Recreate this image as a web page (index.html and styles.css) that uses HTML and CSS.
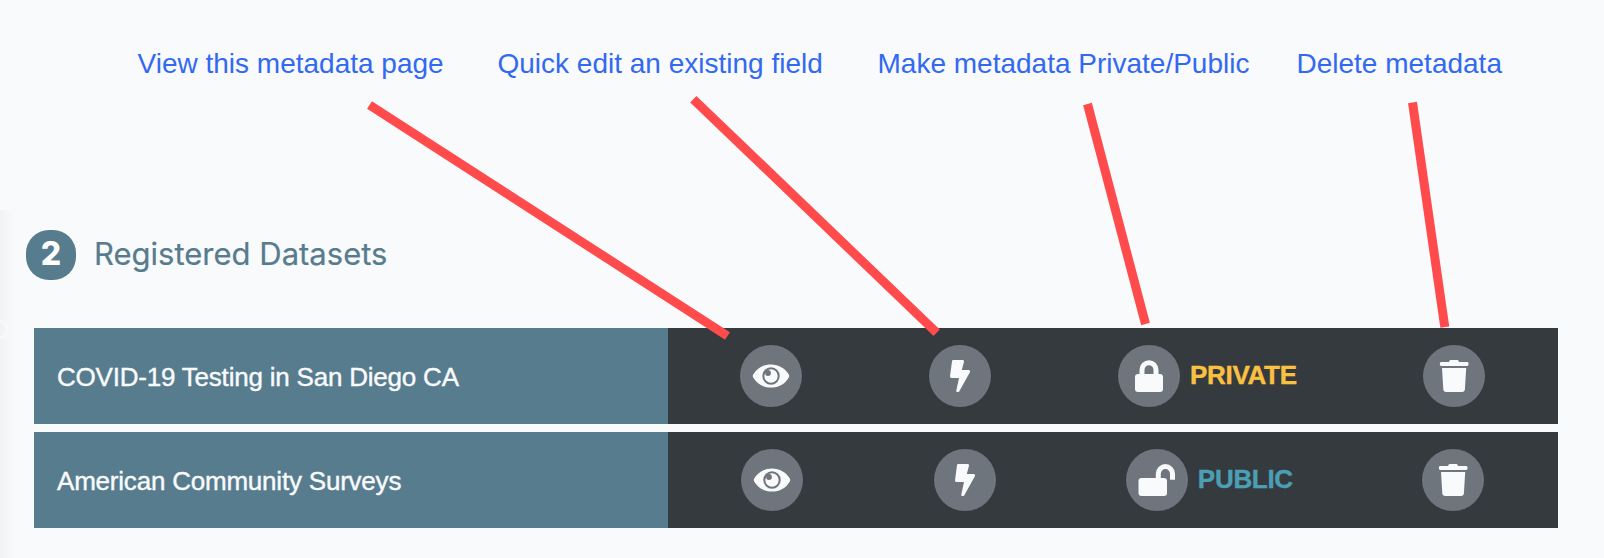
FILE: index.html
```html
<!DOCTYPE html>
<html lang="en">
<head>
<meta charset="utf-8">
<title>Registered Datasets</title>
<link rel="stylesheet" href="styles.css">
</head>
<body>
<svg class="symbols" width="0" height="0">
  <symbol id="eye" viewBox="0 0 62 62">
    <path fill="#f8fafc" d="M13.2 29.6C17 23 23.500 19.400 31 19.400S45 23 48.800 29.600a2.700 2.700 0 0 1 0 2.800C45 39 38.500 42.600 31 42.600S17 39 13.200 32.400a2.700 2.700 0 0 1 0-2.800Z"/>
    <circle cx="31" cy="31" r="7.700" fill="#f8fafc" stroke="#6e757d" stroke-width="2"/>
    <circle cx="28" cy="28" r="2.900" fill="#6e757d"/>
  </symbol>
  <symbol id="bolt" viewBox="0 0 62 62">
    <path fill="#f8fafc" d="M24.500 15h9.200c1 0 1.600.9 1.300 1.800L32.800 25H39.600c1.200 0 1.900 1.200 1.300 2.200L30.300 46.200c-.4.700-.9.900-1.700.9-1 0-1.500-.9-1.300-1.700L30 33H22.500c-.9 0-1.600-.8-1.500-1.700L23 16.300c.1-.8.700-1.300 1.500-1.300Z"/>
  </symbol>
  <symbol id="lock" viewBox="0 0 62 62">
    <path fill="none" stroke="#f8fafc" stroke-width="5" d="M24 32v-7a7 7.300 0 0 1 14 0v7"/>
    <rect x="17" y="29" width="28" height="18" rx="3" fill="#f8fafc"/>
  </symbol>
  <symbol id="unlock" viewBox="0 0 62 62">
    <path fill="none" stroke="#f8fafc" stroke-width="5" d="M32.300 32v-7.300a7.100 7.100 0 0 1 14.200 0v6"/>
    <rect x="12.500" y="29" width="28.500" height="18" rx="3" fill="#f8fafc"/>
  </symbol>
  <symbol id="trash" viewBox="0 0 62 62">
    <path fill="#f8fafc" d="M18.200 17H26l.5-1.200c.3-.6.8-.8 1.300-.8h6.400c.6 0 1.100.2 1.400.8L36 17h8.100c.9 0 1.400.6 1.400 1.400v1.200c0 .9-.5 1.400-1.400 1.400H18.200c-.8 0-1.300-.5-1.300-1.400v-1.200c0-.8.500-1.400 1.300-1.400ZM19 23h24.200l-1.300 21.200c-.1 1.700-1.200 2.800-2.900 2.800H23.200c-1.700 0-2.800-1.100-2.900-2.800Z"/>
  </symbol>
</svg>

<header class="labels">
  <span class="label">View this metadata page</span>
  <span class="label">Quick edit an existing field</span>
  <span class="label">Make metadata Private/Public</span>
  <span class="label">Delete metadata</span>
</header>

<main class="panel">
  <h1 class="heading"><span class="step">2</span><span class="title">Registered Datasets</span></h1>
  <div class="rows">
    <div class="row">
      <div class="name">COVID-19 Testing in San Diego CA</div>
      <div class="actions">
        <span class="btn"><svg><use href="#eye"/></svg></span>
        <span class="btn"><svg><use href="#bolt"/></svg></span>
        <span class="privacy is-private"><span class="btn"><svg><use href="#lock"/></svg></span><b>PRIVATE</b></span>
        <span class="btn"><svg><use href="#trash"/></svg></span>
      </div>
    </div>
    <div class="row">
      <div class="name">American Community Surveys</div>
      <div class="actions">
        <span class="btn"><svg><use href="#eye"/></svg></span>
        <span class="btn"><svg><use href="#bolt"/></svg></span>
        <span class="privacy is-public"><span class="btn"><svg><use href="#unlock"/></svg></span><b>PUBLIC</b></span>
        <span class="btn"><svg><use href="#trash"/></svg></span>
      </div>
    </div>
  </div>
</main>

<div class="edge-shadow"><i class="edge-ring"></i></div>

<svg class="pointers" viewBox="0 0 1604 558">
  <path d="M369.500 105 727.500 336M693.300 99.200 936.700 332.700M1087.500 104 1145.500 324M1412.500 102.500 1444.800 327.200"/>
</svg>
</body>
</html>
```
FILE: styles.css
```css
* { box-sizing: border-box; }
body {
  position: relative;
  margin: 0;
  width: 1604px;
  height: 558px;
  overflow: hidden;
  background: #f8fafc;
  font-family: "Liberation Sans", Arial, sans-serif;
}
.symbols { position: absolute; }

.labels {
  display: grid;
  grid-template-columns: 360px 380px 419px 1fr;
  height: 210px;
  padding: 48px 0 0 137.5px;
}
.label {
  color: #3369f0;
  font-size: 28px;
  line-height: 32px;
  white-space: nowrap;
}

.panel { padding: 20px 46px 0 26px; }
.heading {
  display: flex;
  align-items: center;
  gap: 18px;
  height: 50px;
  margin: 0 0 48px;
  color: #577c8e;
  font: 400 31px/48px Inter, sans-serif;
}
.title {
  height: 50px;
  -webkit-text-stroke: 0.2px #577c8e;
}
.step {
  width: 50px;
  height: 50px;
  border-radius: 23px;
  background: #577c8e;
  color: #fff;
  font-size: 32px;
  font-weight: 800;
  text-align: center;
}
.rows {
  display: grid;
  gap: 8px;
  padding-left: 8px;
}
.row {
  display: grid;
  grid-template-columns: 634px 890px;
  height: 96px;
}
.name {
  display: flex;
  align-items: center;
  padding: 2px 0 0 23px;
  background: #577c8e;
  color: #f8fafc;
  font-size: 26px;
  letter-spacing: -0.21px;
  white-space: nowrap;
  -webkit-text-stroke: 0.4px #f8fafc;
}
.actions {
  display: flex;
  align-items: center;
  justify-content: space-around;
  padding: 0 9.5px 0 8.5px;
  background: #353a3e;
}
.row:last-child .actions { padding: 0 9px 0 8px; }
.btn {
  flex: none;
  width: 62px;
  height: 62px;
  border-radius: 50%;
  background: #6e757d;
}
.btn svg { display: block; width: 62px; height: 62px; }
.privacy {
  display: flex;
  align-items: center;
  gap: 10px;
}
.privacy b {
  padding-bottom: 3px;
  font-size: 26px;
  line-height: 30px;
  letter-spacing: -0.3px;
  white-space: nowrap;
  -webkit-text-stroke: 0.4px currentColor;
}
.is-private { width: 178px; color: #f9c041; }
.is-public { width: 165.6px; color: #4a9fb5; }

.edge-shadow {
  position: absolute;
  left: 0;
  top: 210px;
  width: 14px;
  height: 348px;
  overflow: hidden;
  background: linear-gradient(to right, rgba(0, 0, 0, 0.03), rgba(0, 0, 0, 0));
}
.edge-ring {
  position: absolute;
  left: -9px;
  top: 110px;
  width: 18px;
  height: 19px;
  border: 3px solid rgba(248, 250, 252, 0.7);
  border-radius: 50%;
}

.pointers {
  position: absolute;
  left: 0;
  top: 0;
  width: 1604px;
  height: 558px;
  fill: none;
  stroke: #ff4b4b;
  stroke-width: 9px;
}
```
